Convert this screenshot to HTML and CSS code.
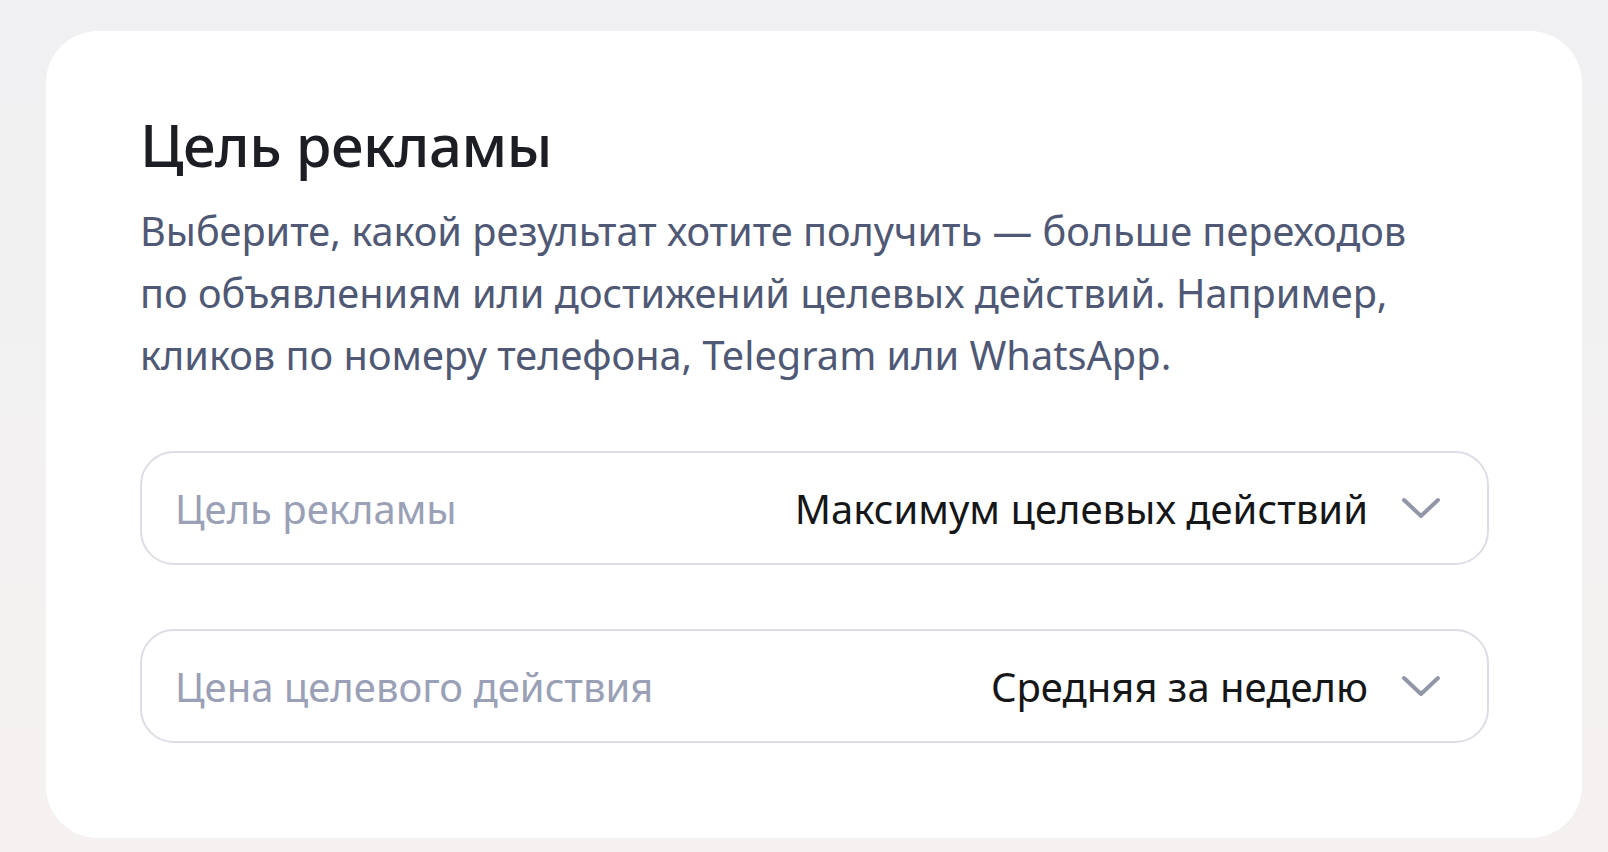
FILE: index.html
```html
<!DOCTYPE html>
<html lang="ru">
<head>
    <meta charset="UTF-8">
    <meta name="viewport" content="width=device-width, initial-scale=1.0">
    <title>Цель рекламы</title>
    <link rel="stylesheet" href="styles.css">
</head>
<body>

    <div class="card">
        <h1>Цель рекламы</h1>
        <p class="hint">
            Выберите, какой результат хотите получить — больше переходов<br>
            по объявлениям или достижений целевых действий. Например,<br>
            кликов по номеру телефона, Telegram или WhatsApp.
        </p>

        <!-- Настройки цели -->
        <div class="fields">
            <div class="select">
                <span class="select-label">Цель рекламы</span>
                <span class="select-value">Максимум целевых действий</span>
                <svg class="chevron" viewBox="0 0 40 22" width="40" height="22">
                    <path d="M3 3 L20 19 L37 3" fill="none" stroke="currentColor" stroke-width="4" stroke-linecap="round" stroke-linejoin="round"/>
                </svg>
            </div>
            <div class="select">
                <span class="select-label">Цена целевого действия</span>
                <span class="select-value">Средняя за неделю</span>
                <svg class="chevron" viewBox="0 0 40 22" width="40" height="22">
                    <path d="M3 3 L20 19 L37 3" fill="none" stroke="currentColor" stroke-width="4" stroke-linecap="round" stroke-linejoin="round"/>
                </svg>
            </div>
        </div>
    </div>

</body>
</html>
```

FILE: styles.css
```css
body {
    font-family: "Noto Sans", Arial, sans-serif;
    background: linear-gradient(180deg, #f0f0f2 0%, #f3f1f1 60%, #f5f1f0 100%);
    margin: 0;
    padding: 31px 26px 16px 46px;
    min-height: 852px;
    box-sizing: border-box;
}
.card {
    background-color: #fff;
    border-radius: 52px;
    padding: 78px 93px 95px 94px;
}
h1 {
    margin: 0;
    font-size: 58px;
    font-weight: 500;
    line-height: 72px;
    color: #1c1e23;
    letter-spacing: -0.5px;
}
.hint {
    margin: 20px 0 0;
    font-size: 39.7px;
    line-height: 61.8px;
    color: #4f5874;
}
.fields {
    margin-top: 65px;
    display: flex;
    flex-direction: column;
    gap: 64px;
}
.select {
    display: flex;
    align-items: center;
    height: 114px;
    box-sizing: border-box;
    padding: 0 46px 0 33px;
    border: 2px solid #dcdee5;
    border-radius: 34px;
    font-size: 40px;
}
.select-label {
    flex: 1;
    color: #9aa0b6;
}
.select-value {
    color: #151617;
}
.chevron {
    margin-left: 33px;
    color: #9297a8;
}
```
